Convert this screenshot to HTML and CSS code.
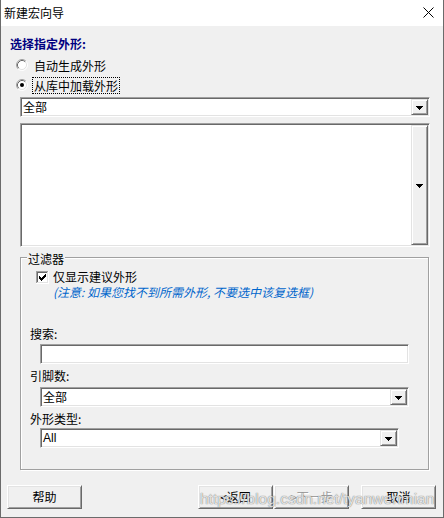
FILE: index.html
```html
<!DOCTYPE html>
<html lang="zh-CN">
<head>
<meta charset="utf-8">
<title>新建宏向导</title>
<link rel="stylesheet" href="styles.css">
</head>
<body>
<div class="window">
  <div class="titlebar">
    <span class="title">新建宏向导</span>
    <svg class="close" width="11" height="11" viewBox="0 0 11 11"><path d="M0.5 0.5L10.5 10.5M10.5 0.5L0.5 10.5" stroke="#000" stroke-width="1" fill="none"/></svg>
  </div>
  <div class="client">
    <div class="heading">选择指定外形:</div>
    <div class="radios">
      <div class="radio-row">
        <svg class="radio" width="12" height="12" viewBox="0 0 12 12">
          <circle cx="6" cy="6" r="5" fill="#fff"/>
          <path d="M2.11 9.89A5.5 5.5 0 0 1 9.89 2.11" stroke="#a0a0a0" fill="none"/>
          <path d="M9.89 2.11A5.5 5.5 0 0 1 2.11 9.89" stroke="#ffffff" fill="none"/>
          <path d="M2.82 9.18A4.5 4.5 0 0 1 9.18 2.82" stroke="#696969" fill="none"/>
          <path d="M9.18 2.82A4.5 4.5 0 0 1 2.82 9.18" stroke="#e3e3e3" fill="none"/>
        </svg>
        <span class="rlabel">自动生成外形</span>
      </div>
      <div class="radio-row">
        <svg class="radio" width="12" height="12" viewBox="0 0 12 12">
          <circle cx="6" cy="6" r="5" fill="#fff"/>
          <path d="M2.11 9.89A5.5 5.5 0 0 1 9.89 2.11" stroke="#a0a0a0" fill="none"/>
          <path d="M9.89 2.11A5.5 5.5 0 0 1 2.11 9.89" stroke="#ffffff" fill="none"/>
          <path d="M2.82 9.18A4.5 4.5 0 0 1 9.18 2.82" stroke="#696969" fill="none"/>
          <path d="M9.18 2.82A4.5 4.5 0 0 1 2.82 9.18" stroke="#e3e3e3" fill="none"/>
          <circle cx="6" cy="6" r="2" fill="#000"/>
        </svg>
        <span class="rlabel focus">从库中加载外形</span>
      </div>
    </div>

    <div class="combo combo-main">
      <span class="value">全部</span>
      <span class="dropbtn"><svg width="7" height="4" viewBox="0 0 7 4" shape-rendering="crispEdges"><path d="M0 0h7v1H0zM1 1h5v1H1zM2 2h3v1H2zM3 3h1v1H3z" fill="#000"/></svg></span>
    </div>

    <div class="listbox">
      <div class="list-area"></div>
      <span class="dropbtn tall"><svg width="7" height="4" viewBox="0 0 7 4" shape-rendering="crispEdges"><path d="M0 0h7v1H0zM1 1h5v1H1zM2 2h3v1H2zM3 3h1v1H3z" fill="#000"/></svg></span>
    </div>

    <div class="group">
      <div class="legend">过滤器</div>
      <div class="check-row">
        <svg class="checkbox" width="13" height="13" viewBox="0 0 13 13" shape-rendering="crispEdges">
          <rect width="13" height="13" fill="#fff"/>
          <path d="M0 0h12v1H1v11H0z" fill="#a0a0a0"/>
          <path d="M1 1h10v1H2v9H1z" fill="#696969"/>
          <path d="M11 1h1v11H1v-1h10z" fill="#e3e3e3"/>
          <path d="M12 0h1v13H0v-1h12z" fill="#ffffff"/>
          <path d="M3 5h1v3H3zM4 6h1v3H4zM5 7h1v3H5zM6 6h1v3H6zM7 5h1v3H7zM8 4h1v3H8zM9 3h1v3H9z" fill="#000"/>
        </svg>
        <span class="clabel">仅显示建议外形</span>
      </div>
      <div class="note">(注意: 如果您找不到所需外形, 不要选中该复选框)</div>

      <div class="field-label label-search">搜索:</div>
      <div class="textbox"></div>

      <div class="field-label label-pins">引脚数:</div>
      <div class="combo combo-pins">
        <span class="value">全部</span>
        <span class="dropbtn"><svg width="7" height="4" viewBox="0 0 7 4" shape-rendering="crispEdges"><path d="M0 0h7v1H0zM1 1h5v1H1zM2 2h3v1H2zM3 3h1v1H3z" fill="#000"/></svg></span>
      </div>

      <div class="field-label label-type">外形类型:</div>
      <div class="combo combo-type">
        <span class="value latin">All</span>
        <span class="dropbtn"><svg width="7" height="4" viewBox="0 0 7 4" shape-rendering="crispEdges"><path d="M0 0h7v1H0zM1 1h5v1H1zM2 2h3v1H2zM3 3h1v1H3z" fill="#000"/></svg></span>
      </div>
    </div>

    <div class="buttons">
      <div class="btn">帮助</div>
      <div class="btn-group">
        <div class="btn">&lt;返回</div>
        <div class="btn disabled">&gt;下一步</div>
        <div class="btn cancel">取消</div>
      </div>
    </div>
  </div>
  <div class="watermark">https://blog.csdn.net/tyanwenmian</div>
</div>
</body>
</html>
```

FILE: styles.css
```css
* {
  box-sizing: border-box;
}

html,
body {
  margin: 0;
  padding: 0;
}

body {
  width: 444px;
  height: 518px;
  overflow: hidden;
  background: #f0f0f0;
  font-family: "Noto Sans CJK SC", sans-serif;
  font-size: 12px;
  color: #000;
}

.window {
  position: relative;
  width: 444px;
  height: 518px;
  display: flex;
  flex-direction: column;
  background: #f0f0f0;
  border-left: 1px solid #6b6b6b;
  border-right: 1px solid #6b6b6b;
  border-bottom: 1px solid #6b6b6b;
}

/* ---------- title bar ---------- */
.titlebar {
  height: 26px;
  flex: none;
  background: #ffffff;
  display: flex;
  align-items: center;
  justify-content: space-between;
  padding: 0 9px 0 3px;
}

.title {
  line-height: 26px;
  font-size: 12px;
}

.close {
  display: block;
  margin-top: -1px;
}

/* ---------- client area ---------- */
.client {
  flex: 1;
  display: flex;
  flex-direction: column;
  align-items: flex-start;
  padding-top: 11px;
}

.heading {
  line-height: 14px;
  padding-left: 9px;
  font-weight: bold;
  color: #000080;
}

.radios {
  margin-top: 4px;
  display: flex;
  flex-direction: column;
}

.radio-row {
  height: 20px;
  display: flex;
  align-items: center;
  padding-left: 15px;
}

.radio {
  display: block;
  margin-right: 4px;
}

.rlabel {
  line-height: 15px;
  padding: 0 1px;
  border: 1px dotted transparent;
}

.rlabel.focus {
  border-color: #000;
}

/* ---------- sunken controls ---------- */
.combo,
.listbox,
.textbox {
  background: #ffffff;
  border: 1px solid;
  border-color: #a0a0a0 #ffffff #ffffff #a0a0a0;
  box-shadow: inset 1px 1px 0 #696969, inset -1px -1px 0 #e3e3e3;
  padding: 1px;
}

.combo {
  height: 20px;
  display: flex;
}

.combo .value {
  flex: 1;
  line-height: 14px;
  padding: 1px 0 0 1px;
}

.combo .value.latin {
  font-family: "Liberation Sans", sans-serif;
  font-size: 12px;
  padding-top: 1px;
}

.dropbtn {
  width: 17px;
  height: 16px;
  flex: none;
  display: flex;
  align-items: center;
  justify-content: center;
  background: #f0f0f0;
  border: 1px solid;
  border-color: #e3e3e3 #696969 #696969 #e3e3e3;
  box-shadow: inset 1px 1px 0 #ffffff, inset -1px -1px 0 #a0a0a0;
  padding-top: 1px;
}

.dropbtn svg {
  display: block;
}

.combo-main {
  margin: 2px 0 0 19px;
  width: 410px;
}

.listbox {
  margin: 6px 0 0 19px;
  width: 410px;
  height: 124px;
  display: flex;
}

.list-area {
  flex: 1;
}

.dropbtn.tall {
  height: 100%;
}

/* ---------- group box ---------- */
.group {
  margin: 10px 0 0 19px;
  width: 409px;
  height: 213px;
  border: 1px solid #a0a0a0;
  box-shadow: 1px 1px 0 #ffffff, inset 1px 1px 0 #ffffff;
  display: flex;
  flex-direction: column;
  align-items: flex-start;
}

.legend {
  margin: -6px 0 0 6px;
  padding: 0 1px;
  line-height: 14px;
  background: #f0f0f0;
}

.check-row {
  margin-top: 3px;
  height: 16px;
  display: flex;
  align-items: center;
  padding-left: 15px;
}

.checkbox {
  display: block;
  margin-right: 4px;
}

.clabel {
  line-height: 14px;
}

.note {
  line-height: 14px;
  padding-left: 32px;
  color: #0066cc;
  font-style: italic;
  white-space: nowrap;
}

.field-label {
  line-height: 14px;
  padding-left: 9px;
}

.label-search {
  margin-top: 28px;
}

.label-pins {
  margin-top: 5px;
}

.label-type {
  margin-top: 5px;
}

.textbox {
  margin: 3px 0 0 19px;
  width: 369px;
  height: 20px;
}

.combo-pins {
  margin: 4px 0 0 19px;
  width: 369px;
}

.combo-type {
  margin: 2px 0 0 19px;
  width: 359px;
}

/* ---------- buttons ---------- */
.buttons {
  margin-top: 15px;
  width: 100%;
  display: flex;
  justify-content: space-between;
  padding: 0 7px 0 6px;
}

.btn-group {
  display: flex;
}

.btn {
  width: 75px;
  height: 24px;
  display: flex;
  align-items: center;
  justify-content: center;
  line-height: 14px;
  background: #f0f0f0;
  border: 1px solid;
  border-color: #ffffff #696969 #696969 #ffffff;
  box-shadow: inset 1px 1px 0 #e3e3e3, inset -1px -1px 0 #a0a0a0;
}

.btn.disabled {
  margin-left: 1px;
  color: #a0a0a0;
  text-shadow: 1px 1px 0 #ffffff;
}

.btn.cancel {
  margin-left: 12px;
}

/* ---------- watermark overlay ---------- */
.watermark {
  position: absolute;
  left: 199px;
  top: 490px;
  font-family: "Liberation Sans", sans-serif;
  font-size: 15.5px;
  line-height: 18px;
  color: rgba(255, 255, 255, 0.8);
  text-shadow: 0 0 1px rgba(70, 70, 70, 0.7), 0 0 1px rgba(70, 70, 70, 0.4);
  white-space: nowrap;
  pointer-events: none;
}
```
